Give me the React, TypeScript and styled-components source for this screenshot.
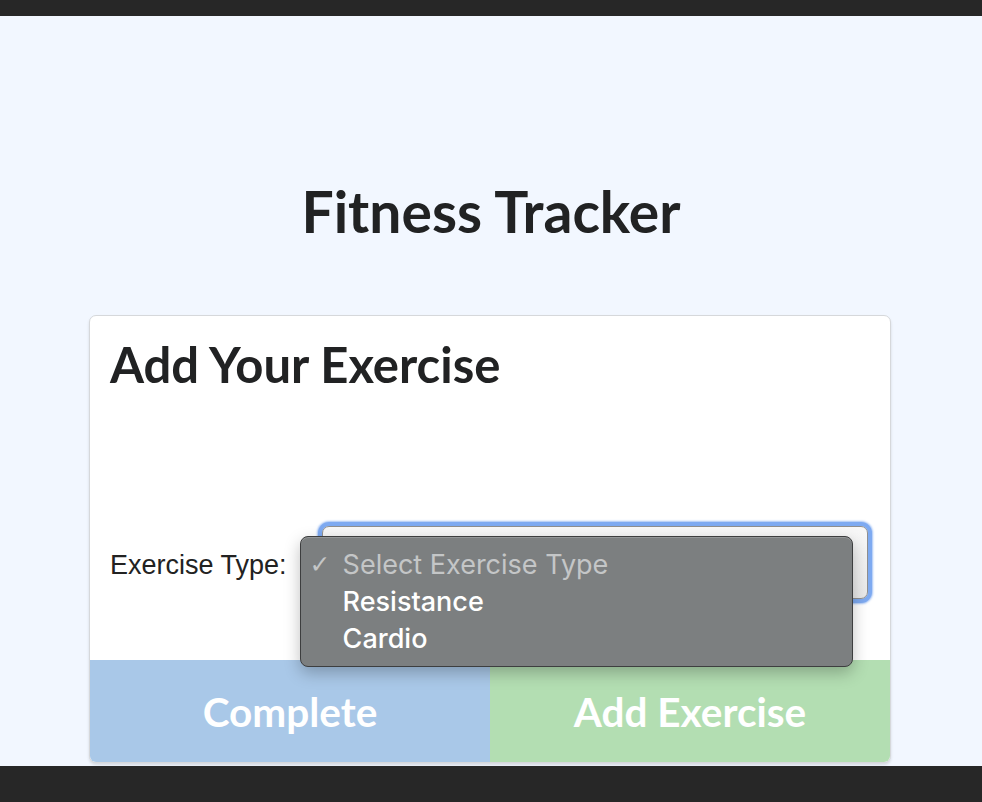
import styled, { createGlobalStyle } from "styled-components";

const GlobalStyle = createGlobalStyle`
  html, body {
    margin: 0;
    padding: 0;
    background: #272727;
  }
  * {
    box-sizing: border-box;
  }
`;

const TopBar = styled.div`
  height: 16px;
  background: #272727;
`;

const Page = styled.main`
  height: 750px;
  background: #f2f7ff;
  display: flex;
  flex-direction: column;
  align-items: center;
  padding-top: 161px;
  overflow: hidden;
`;

const BottomBar = styled.div`
  height: 36px;
  background: #272727;
`;

const Title = styled.h1`
  margin: 0 0 70px;
  font-family: Lato, "Open Sans", sans-serif;
  font-weight: 700;
  font-size: 57px;
  line-height: 1.2;
  color: #212223;
`;

const Card = styled.section`
  width: 802px;
  margin-right: 2px;
  background: #ffffff;
  border: 1px solid #d6d8db;
  border-radius: 7px;
  box-shadow: 0 2px 3px rgba(0, 0, 0, 0.12);
  display: flex;
  flex-direction: column;
`;

const CardBody = styled.div`
  height: 344px;
  padding: 19px 20px 0;
`;

const CardTitle = styled.h2`
  margin: 0;
  font-family: Lato, "Open Sans", sans-serif;
  font-weight: 700;
  font-size: 49px;
  line-height: 1.2;
  color: #212223;
`;

const FormRow = styled.div`
  display: flex;
  align-items: center;
  gap: 35px;
  margin-top: 132px;
`;

const Label = styled.label`
  font-family: "Liberation Sans", Arial, sans-serif;
  font-size: 27px;
  color: #222222;
  padding-top: 6px;
`;

const SelectWrap = styled.div`
  position: relative;
  flex: 1;
  margin-right: 2px;
`;

const SelectBox = styled.div`
  height: 73px;
  border: 1px solid #8f8f8f;
  border-radius: 7px;
  background: linear-gradient(#f8f8f8, #e9e9e9);
  box-shadow: 0 0 0 4px #7eaaf1, 0 0 2px 5px rgba(126, 170, 241, 0.7);
`;

const Menu = styled.ul`
  position: absolute;
  left: -22px;
  top: 10px;
  width: 553px;
  height: 131px;
  margin: 0;
  padding: 9px 0 0;
  list-style: none;
  background: #7c7f80;
  border: 1px solid #3d3e3f;
  border-radius: 8px;
  box-shadow: inset 0 1px 0 rgba(255, 255, 255, 0.18), 0 6px 16px rgba(0, 0, 0, 0.25);
  z-index: 2;
`;

const MenuItem = styled.li<{ $placeholder?: boolean }>`
  display: flex;
  align-items: center;
  height: 37px;
  padding-left: 9px;
  font-family: Inter, "Liberation Sans", sans-serif;
  font-size: 27px;
  font-weight: ${(p) => (p.$placeholder ? 400 : 500)};
  color: ${(p) => (p.$placeholder ? "#c4c6c7" : "#ffffff")};
`;

const Check = styled.span`
  width: 33px;
  font-family: "DejaVu Sans", sans-serif;
  font-size: 25px;
  font-weight: 400;
  color: #c4c6c7;
`;

const Actions = styled.div`
  display: flex;
  height: 102px;
`;

const ActionButton = styled.button<{ $tone: "blue" | "green" }>`
  flex: 1;
  border: none;
  margin: 0;
  padding: 0;
  background: ${(p) => (p.$tone === "blue" ? "#a9c8e8" : "#b3deb2")};
  border-radius: ${(p) => (p.$tone === "blue" ? "0 0 0 6px" : "0 0 6px 0")};
  color: #ffffff;
  font-family: Lato, "Open Sans", sans-serif;
  font-weight: 700;
  font-size: 40.5px;
`;

export default function App() {
  return (
    <>
      <GlobalStyle />
      <TopBar />
      <Page>
        <Title>Fitness Tracker</Title>
        <Card>
          <CardBody>
            <CardTitle>Add Your Exercise</CardTitle>
            <FormRow>
              <Label>Exercise Type:</Label>
              <SelectWrap>
                <SelectBox />
                <Menu>
                  <MenuItem $placeholder>
                    <Check>✓</Check>Select Exercise Type
                  </MenuItem>
                  <MenuItem>
                    <Check />Resistance
                  </MenuItem>
                  <MenuItem>
                    <Check />Cardio
                  </MenuItem>
                </Menu>
              </SelectWrap>
            </FormRow>
          </CardBody>
          <Actions>
            <ActionButton $tone="blue">Complete</ActionButton>
            <ActionButton $tone="green">Add Exercise</ActionButton>
          </Actions>
        </Card>
      </Page>
      <BottomBar />
    </>
  );
}
